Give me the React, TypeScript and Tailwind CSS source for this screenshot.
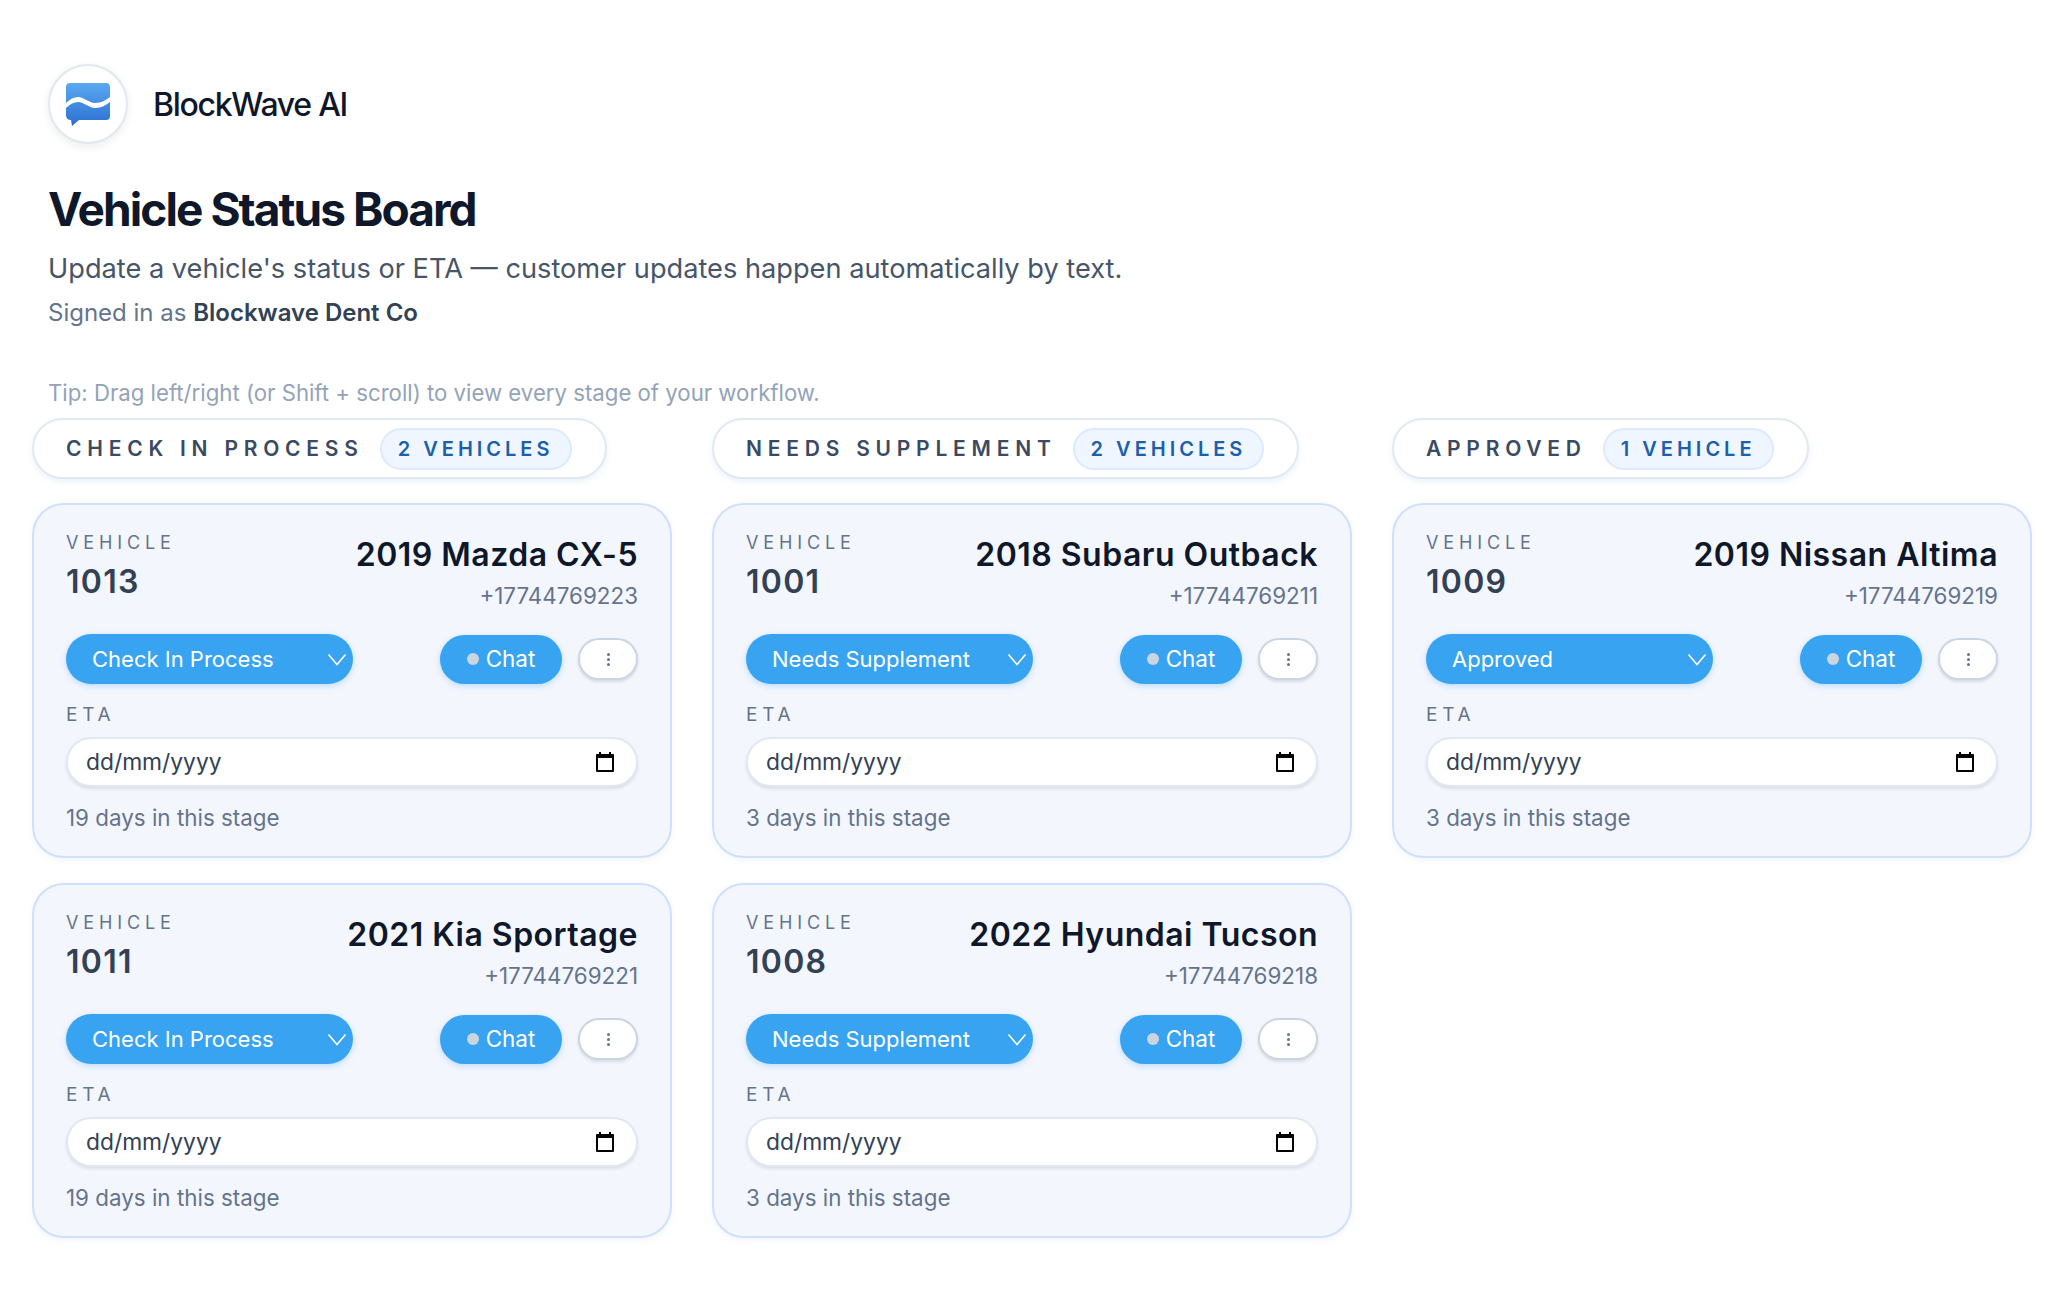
const stages = [
  {
    name: "CHECK IN PROCESS",
    count: "2 VEHICLES",
    status: "Check In Process",
    cars: [
      { id: "1013", title: "2019 Mazda CX-5", phone: "+17744769223", days: 19 },
      { id: "1011", title: "2021 Kia Sportage", phone: "+17744769221", days: 19 },
    ],
  },
  {
    name: "NEEDS SUPPLEMENT",
    count: "2 VEHICLES",
    status: "Needs Supplement",
    cars: [
      { id: "1001", title: "2018 Subaru Outback", phone: "+17744769211", days: 3 },
      { id: "1008", title: "2022 Hyundai Tucson", phone: "+17744769218", days: 3 },
    ],
  },
  {
    name: "APPROVED",
    count: "1 VEHICLE",
    status: "Approved",
    cars: [{ id: "1009", title: "2019 Nissan Altima", phone: "+17744769219", days: 3 }],
  },
];

const Logo = () => (
  <div className="flex h-[80px] w-[80px] items-center justify-center rounded-full border-2 border-[#e2e8f0] bg-white shadow-[0_3px_8px_rgba(15,23,42,0.08)]">
    <svg width="46" height="44" viewBox="0 0 46 44">
      <defs>
        <linearGradient id="bw" x1="0" y1="0" x2="0" y2="1">
          <stop offset="0" stopColor="#5aa9f0" />
          <stop offset="1" stopColor="#2a6fd0" />
        </linearGradient>
      </defs>
      <path
        d="M5 1h36a4 4 0 0 1 4 4v29a4 4 0 0 1-4 4H14l-7 6-1-6a5 5 0 0 1-5-4V5a4 4 0 0 1 4-4z"
        fill="url(#bw)"
      />
      <path d="M1 21C5 17 9 15 13 15C19 15 24 21 30 21C36 21 41 18 45 15V20C41 23 36 26 30 26C24 26 19 20 13 20C9 20 5 22 1 26Z" fill="#fff" />
    </svg>
  </div>
);

const Chevron = () => (
  <svg width="20" height="18" viewBox="0 0 20 18" fill="none" stroke="#fff" strokeWidth="1.6">
    <path d="M1.5 4.5l8.5 10 8.5-10" />
  </svg>
);

const CalendarIcon = () => (
  <svg width="20" height="20" viewBox="0 0 20 20">
    <path d="M4 0h2v2h8V0h2v2h2a1 1 0 0 1 1 1v16a1 1 0 0 1-1 1H2a1 1 0 0 1-1-1V3a1 1 0 0 1 1-1h2z" fill="#000" />
    <rect x="3" y="6" width="14" height="12" fill="#fff" />
  </svg>
);

const VehicleCard = ({ car, status }: { car: (typeof stages)[number]["cars"][number]; status: string }) => (
  <div className="flex h-[355px] flex-col rounded-[32px] border-2 border-[#cfe0fb] bg-[#f4f6fe] px-[32px] pt-[25px] shadow-[0_2px_6px_rgba(59,130,246,0.08)]">
    <div className="flex h-[99px] items-start justify-between">
      <div>
        <div className="text-[18px] leading-[26px] tracking-[0.27em] text-[#64748b]">VEHICLE</div>
        <div className="mt-[4px] text-[32px] leading-[44px] font-semibold tracking-[0.04em] text-[#334155]">{car.id}</div>
      </div>
      <div className="text-right">
        <div className="mt-[3px] text-[32px] leading-[44px] font-semibold tracking-[0.015em] text-[#0f172a]">{car.title}</div>
        <div className="mt-[4px] text-[22.4px] leading-[30px] text-[#64748b]">{car.phone}</div>
      </div>
    </div>
    <div className="mt-[5px] flex items-center">
      <div className="flex h-[50px] w-[287px] items-center justify-between rounded-full bg-[#38a3f1] pr-[6px] pl-[26px] text-[22px] text-white shadow-[0_2px_6px_rgba(56,163,241,0.3)]">
        <span>{status}</span>
        <Chevron />
      </div>
      <div className="ml-auto flex h-[49px] w-[122px] items-center justify-center gap-[7px] rounded-full bg-[#38a3f1] text-[22.5px] text-white shadow-[0_2px_6px_rgba(56,163,241,0.3)]">
        <span className="h-[12px] w-[12px] rounded-full bg-[#cbd5e1]" />
        Chat
      </div>
      <div className="ml-[16px] flex h-[42px] w-[60px] flex-col items-center justify-center gap-[2px] rounded-full border-2 border-[#cbd5e1] bg-white shadow-[0_2px_3px_rgba(15,23,42,0.12)]">
        <span className="h-[3px] w-[3px] rounded-full bg-[#64748b]" />
        <span className="h-[3px] w-[3px] rounded-full bg-[#64748b]" />
        <span className="h-[3px] w-[3px] rounded-full bg-[#64748b]" />
      </div>
    </div>
    <div className="mt-[18px] text-[19px] leading-[26px] tracking-[0.25em] text-[#64748b]">ETA</div>
    <div className="mt-[9px] flex h-[50px] items-center justify-between rounded-full border-2 border-[#e2e8f0] bg-white pr-[21px] pl-[18px] text-[22.8px] text-[#334155] shadow-[0_2px_3px_rgba(15,23,42,0.1)]">
      <span>dd/mm/yyyy</span>
      <CalendarIcon />
    </div>
    <div className="mt-[16px] text-[22.4px] leading-[30px] text-[#64748b]">{car.days} days in this stage</div>
  </div>
);

export default function App() {
  return (
    <div className="min-h-[1292px] bg-white font-['Inter',sans-serif]">
      <div className="px-[48px] pt-[64px]">
        <div className="flex items-center gap-[25px]">
          <Logo />
          <span className="relative top-[1px] text-[32px] font-medium tracking-[-0.04em] text-[#0f172a]">BlockWave AI</span>
        </div>
        <h1 className="mt-[35px] text-[46px] leading-[60px] font-bold tracking-[-0.042em] text-[#0f172a]">Vehicle Status Board</h1>
        <p className="mt-[9px] text-[27.2px] leading-[42px] text-[#475569]">
          Update a vehicle's status or ETA — customer updates happen automatically by text.
        </p>
        <p className="mt-[6px] text-[24px] leading-[34px] text-[#64748b]">
          Signed in as <span className="font-semibold text-[#334155]">Blockwave Dent Co</span>
        </p>
        <p className="mt-[47px] text-[22.2px] leading-[32px] text-[#94a3b8]">
          Tip: Drag left/right (or Shift + scroll) to view every stage of your workflow.
        </p>
      </div>
      <div className="mt-[9px] flex gap-[40px] pl-[32px]">
        {stages.map((stage) => (
          <div key={stage.name} className="flex w-[640px] flex-col items-stretch">
            <div className="flex h-[61px] w-fit items-center gap-[16px] rounded-full border-2 border-[#e2e8f0] bg-white pr-[33px] pl-[32px] shadow-[0_3px_6px_rgba(59,130,246,0.1)]">
              <span className="text-[21px] font-semibold tracking-[0.275em] text-[#3b4a63]">{stage.name}</span>
              <span className="flex h-[42px] items-center rounded-full border-2 border-[#dbeafe] bg-[#eff6ff] px-[16px] text-[20px] font-semibold tracking-[0.2em] text-[#1d5fa8]">
                {stage.count}
              </span>
            </div>
            <div className="mt-[24px] flex flex-col gap-[25px]">
              {stage.cars.map((car) => (
                <VehicleCard key={car.id} car={car} status={stage.status} />
              ))}
            </div>
          </div>
        ))}
      </div>
    </div>
  );
}
